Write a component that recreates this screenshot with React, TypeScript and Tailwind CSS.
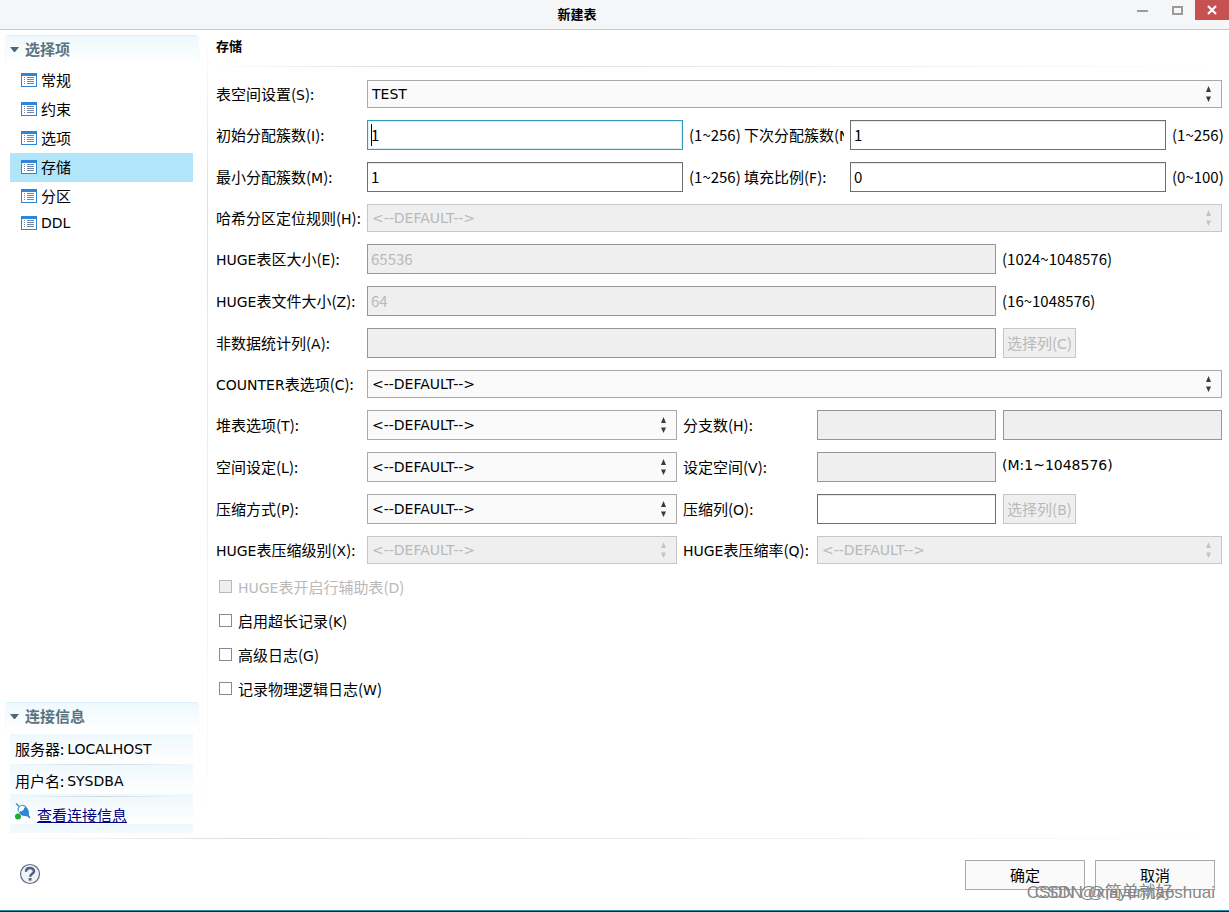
import type { ReactNode } from "react";

const NAV_ITEMS = ["常规", "约束", "选项", "存储", "分区", "DDL"];

const CHECKS = [
  { id: "huge-aux", label: "HUGE表开启行辅助表(D)", disabled: true },
  { id: "long-row", label: "启用超长记录(K)" },
  { id: "adv-log", label: "高级日志(G)" },
  { id: "phy-log", label: "记录物理逻辑日志(W)" },
];

// Letters are set in the wide UI face, everything else in the CJK one.
function Mixed({ text }: { text: string }) {
  return (
    <>
      {text.split(/([A-Za-z]+)/).map((part, i) =>
        i % 2 ? (
          <span key={i} className="font-['DejaVu_Sans',sans-serif] text-[14px]">
            {part}
          </span>
        ) : (
          part
        ),
      )}
    </>
  );
}

function Label({ htmlFor, text }: { htmlFor: string; text: string }) {
  return (
    <label htmlFor={htmlFor} className="overflow-hidden whitespace-nowrap leading-[24px]">
      <Mixed text={text} />
    </label>
  );
}

function Field({
  id,
  value = "",
  disabled,
  focused,
  className = "",
  label,
}: {
  id: string;
  value?: string;
  disabled?: boolean;
  focused?: boolean;
  className?: string;
  label?: string;
}) {
  const tone = disabled
    ? "border-[#969696] bg-[#efefef] text-[#b9b9b9]"
    : focused
      ? "border-[#3399bb] bg-white shadow-[inset_0_0_0_1px_#d8f0f8]"
      : "border-[#6e6e6e] bg-white shadow-[inset_0_1px_0_#e8e8e8]";
  return (
    <div className={`relative min-w-0 ${className}`}>
      <input
        id={id}
        aria-label={label}
        defaultValue={value}
        disabled={disabled}
        className={`block h-[30px] w-full border px-[3px] pb-[2px] outline-none ${tone}`}
      />
      {focused && <span className="absolute left-1 top-1 h-[22px] w-px bg-black" />}
    </div>
  );
}

function Combo({
  id,
  value = "<--DEFAULT-->",
  disabled,
  tall,
  className = "",
}: {
  id: string;
  value?: string;
  disabled?: boolean;
  tall?: boolean;
  className?: string;
}) {
  return (
    <div className={`relative min-w-0 ${className}`}>
      <select
        id={id}
        disabled={disabled}
        className={`block w-full appearance-none border pl-1 font-['DejaVu_Sans',sans-serif] text-[14px] opacity-100 outline-none ${
          tall ? "h-[30px]" : "h-[28px]"
        } ${disabled ? "border-[#c6c6c6] bg-[#efefef] text-[#b9b9b9]" : "border-[#a9a9a9] bg-[#fafafa] text-black"}`}
      >
        <option>{value}</option>
      </select>
      <svg
        viewBox="0 0 6 16"
        className={`pointer-events-none absolute right-[10px] top-1/2 h-4 w-[6px] -translate-y-1/2 ${
          disabled ? "fill-[#c4c4c4]" : "fill-[#3a3a3a]"
        }`}
      >
        <path d="M2.500 0 5 6H0zM0 10.500H5L2.500 16z" />
      </svg>
    </div>
  );
}

function PickButton({ text }: { text: string }) {
  return (
    <button
      type="button"
      disabled
      className="ml-px h-[30px] w-[73px] whitespace-nowrap border border-[#c6c6c6] bg-[#efefef] text-[#b9b9b9]"
    >
      <Mixed text={text} />
    </button>
  );
}

function SectionHeader({ children }: { children: ReactNode }) {
  return (
    <div className="flex h-[28px] items-center gap-[5px] rounded-t border-x border-t border-x-[#f1fafd] border-t-[#d8f2f8] bg-linear-to-b from-[#eef9fd] to-white pb-[2px] pl-1 font-bold text-[#5b7480]">
      <svg viewBox="0 0 9 5" className="mr-px mt-px h-[5px] w-[9px] fill-[#4d6874]">
        <path d="M0 0H9L5 5H4z" />
      </svg>
      {children}
    </div>
  );
}

function ListIcon() {
  return (
    <svg viewBox="0 0 16 14" className="h-[14px] w-4 shrink-0">
      <path d="M0 0H16V14H0z" fill="#2d86d8" />
      <path d="M1 3H15V13H1z" fill="#fff" />
      <path
        d="M3 4H4V5H3zM3 6H4V7H3zM3 8H4V9H3zM3 10H4V11H3zM6 4H13V5H6zM6 6H13V7H6zM6 8H13V9H6zM6 10H13V11H6z"
        fill="#7187a8"
      />
    </svg>
  );
}

function PlugIcon() {
  return (
    <svg viewBox="0 0 16 17" className="h-[17px] w-4 shrink-0">
      <path d="M1 0.500 4 3.500M12.500 12 15 15" stroke="#3e8fc8" strokeWidth="1.300" fill="none" />
      <path d="M3.500 8.500C2 5 4.500 1.800 8 2.300 9.500 2.600 10.800 3.400 11 4.500" fill="#fff" stroke="#4a9cc8" strokeWidth="1.200" />
      <path d="M4 9.500 5.500 8 6.500 8.500 9 6.500 9 5 10.800 3.800C13.500 6 14.500 9 13.800 12L15 15 12 13.300C9 13.500 5.500 12.500 4 9.500z" fill="#2d86d8" />
      <circle cx="3" cy="13.500" r="3" fill="#22aa33" />
    </svg>
  );
}

function Sidebar() {
  return (
    <aside className="flex w-[207px] shrink-0 flex-col pl-[5px] pr-2 pt-[5px]">
      <SectionHeader>选择项</SectionHeader>
      <nav className="ml-[5px] mr-[6px] mt-[3px] flex flex-col">
        {NAV_ITEMS.map((item) => (
          <button
            key={item}
            type="button"
            className={`flex items-center gap-1 pb-[2px] pl-[11px] text-left ${
              item === "DDL" ? "h-[25px]" : "h-[29px]"
            } ${item === "存储" ? "bg-[#b0e5fa]" : ""}`}
          >
            <ListIcon />
            <Mixed text={item} />
          </button>
        ))}
      </nav>
      <div className="mt-auto">
        <SectionHeader>连接信息</SectionHeader>
        <div className="mb-[5px] ml-[5px] mr-[6px] mt-1 h-[99px] bg-[repeating-linear-gradient(#eef8fd_0,#ffffff_30px)] px-[5px]">
          <div className="flex h-[30px] items-center gap-[3px]">
            服务器: <Mixed text="LOCALHOST" />
          </div>
          <div className="h-px bg-linear-to-r from-transparent via-[#d0d8dc] to-transparent" />
          <div className="flex h-[31px] items-center gap-[3px]">
            用户名: <Mixed text="SYSDBA" />
          </div>
          <div className="h-px bg-linear-to-r from-transparent via-[#d0d8dc] to-transparent" />
          <div className="flex h-[36px] gap-[6px] pt-[6px]">
            <PlugIcon />
            <a href="#connection" className="leading-[24px] text-[#000080] underline">
              查看连接信息
            </a>
          </div>
        </div>
      </div>
    </aside>
  );
}

function StorageForm() {
  return (
    <form className="grid grid-cols-[145px_310fr_128px_179fr_220fr] items-center gap-x-[6px] gap-y-3 pl-2 pr-[7px] pt-[13px]">
      <Label htmlFor="tablespace" text="表空间设置(S):" />
      <Combo id="tablespace" value="TEST" className="col-span-4" />

      <Label htmlFor="initial" text="初始分配簇数(I):" />
      <div className="col-span-4 flex items-center gap-[6px]">
        <Field id="initial" value="1" focused className="flex-1" />
        <span className="w-[49px] whitespace-nowrap">(1~256)</span>
        <div className="flex w-[100px]">
          <Label htmlFor="next" text="下次分配簇数(N):" />
        </div>
        <Field id="next" value="1" className="flex-1" />
        <span className="w-[50px] whitespace-nowrap">(1~256)</span>
      </div>

      <Label htmlFor="minimum" text="最小分配簇数(M):" />
      <div className="col-span-4 flex items-center gap-[6px]">
        <Field id="minimum" value="1" className="flex-1" />
        <span className="w-[49px] whitespace-nowrap">(1~256)</span>
        <div className="flex w-[100px]">
          <Label htmlFor="fill" text="填充比例(F):" />
        </div>
        <Field id="fill" value="0" className="flex-1" />
        <span className="w-[50px] whitespace-nowrap">(0~100)</span>
      </div>

      <Label htmlFor="hash" text="哈希分区定位规则(H):" />
      <Combo id="hash" disabled className="col-span-4" />

      <Label htmlFor="section" text="HUGE表区大小(E):" />
      <Field id="section" value="65536" disabled className="col-span-3" />
      <span>(1024~1048576)</span>

      <Label htmlFor="filesize" text="HUGE表文件大小(Z):" />
      <Field id="filesize" value="64" disabled className="col-span-3" />
      <span>(16~1048576)</span>

      <Label htmlFor="nostat" text="非数据统计列(A):" />
      <Field id="nostat" disabled className="col-span-3" />
      <PickButton text="选择列(C)" />

      <Label htmlFor="counter" text="COUNTER表选项(C):" />
      <Combo id="counter" className="col-span-4" />

      <Label htmlFor="heap" text="堆表选项(T):" />
      <Combo id="heap" tall />
      <Label htmlFor="branch" text="分支数(H):" />
      <Field id="branch" disabled />
      <Field id="nobranch" disabled label="分支数" className="ml-px" />

      <Label htmlFor="space" text="空间设定(L):" />
      <Combo id="space" tall />
      <Label htmlFor="spacesize" text="设定空间(V):" />
      <Field id="spacesize" disabled />
      <span className="pb-1 font-['DejaVu_Sans',sans-serif] text-[14px]">(M:1~1048576)</span>

      <Label htmlFor="compress" text="压缩方式(P):" />
      <Combo id="compress" tall />
      <Label htmlFor="columns" text="压缩列(O):" />
      <Field id="columns" />
      <PickButton text="选择列(B)" />

      <Label htmlFor="level" text="HUGE表压缩级别(X):" />
      <Combo id="level" disabled />
      <Label htmlFor="ratio" text="HUGE表压缩率(Q):" />
      <Combo id="ratio" disabled className="col-span-2" />

      {CHECKS.map((c) => (
        <div key={c.id} className="col-span-5 flex h-[22px] items-center gap-[6px] pl-[3px]">
          <input
            id={c.id}
            type="checkbox"
            disabled={c.disabled}
            className={`mb-[2px] size-[13px] appearance-none border ${
              c.disabled ? "border-[#b9b9b9] bg-[#efefef]" : "border-[#8a8a8a] bg-white"
            }`}
          />
          <label htmlFor={c.id} className={c.disabled ? "text-[#b9b9b9]" : ""}>
            <Mixed text={c.label} />
          </label>
        </div>
      ))}
    </form>
  );
}

function Divider() {
  return <div className="h-px bg-linear-to-r from-white via-[#dcdcdc] via-20% to-white" />;
}

export default function App() {
  return (
    <div className="relative flex min-h-screen flex-col bg-white font-['Noto_Sans_CJK_SC',sans-serif] text-[15px] leading-[22px] text-black">
      <header className="relative flex h-[30px] items-center justify-center border-b border-[#c8c8c8] bg-[#f5f6f8]">
        <h1 className="pb-px pr-[75px] text-[13px] font-bold">新建表</h1>
        <div className="absolute right-0 top-0 flex h-5">
          <button type="button" aria-label="最小化" className="flex w-[35px] items-center justify-center">
            <span className="mt-[2px] h-[2px] w-[11px] bg-[#9b9b9b]" />
          </button>
          <button type="button" aria-label="最大化" className="flex w-[35px] items-center justify-center">
            <span className="mt-px h-[9px] w-[11px] border-2 border-[#9b9b9b]" />
          </button>
          <button type="button" aria-label="关闭" className="flex w-[34px] items-center justify-center bg-[#c75050]">
            <svg viewBox="0 0 10 10" className="size-[10px]">
              <path d="M1 1 9 9M9 1 1 9" stroke="#fff" strokeWidth="2.200" />
            </svg>
          </button>
        </div>
      </header>

      <div className="flex flex-1">
        <Sidebar />
        <div className="w-px bg-linear-to-b from-white via-[#e0e0e0] via-20% to-white" />
        <main className="min-w-0 flex-1">
          <h2 className="flex h-[36px] items-center pb-1 pl-2 text-[13px] font-bold">存储</h2>
          <Divider />
          <StorageForm />
        </main>
      </div>

      <Divider />
      <footer className="flex h-[71px] items-center justify-between pl-[19px] pr-[14px]">
        <button type="button" aria-label="帮助" className="pb-[2px]">
          <svg viewBox="0 0 22 22" className="size-[22px]">
            <circle cx="11" cy="11" r="9.500" fill="#f2f2f2" stroke="#5a6b8c" strokeWidth="1.200" />
            <path
              d="M7 8.800C7 3.800 15 4 15 8.200 15 10.800 11.200 10.800 11.200 13.800"
              fill="none"
              stroke="#4f6184"
              strokeWidth="2.600"
            />
            <path d="M9.700 15H12.500V17.600H9.700z" fill="#4f6184" />
          </svg>
        </button>
        <div className="flex gap-[10px]">
          <button type="button" className="h-[30px] w-[120px] border border-[#a9a9a9] bg-[#fafafa]">
            确定
          </button>
          <button type="button" className="h-[30px] w-[120px] border border-[#a9a9a9] bg-[#fafafa]">
            取消
          </button>
        </div>
      </footer>
      <div className="h-[2px] border-t border-[#2a8aa5] bg-[#0c2a3c]" />

      <div className="pointer-events-none absolute bottom-2 right-[14px] grid whitespace-nowrap font-['Liberation_Sans','Noto_Sans_CJK_SC',sans-serif] text-[17px] text-[#888888]">
        <span className="col-start-1 row-start-1">CSDN @xiayunhaoshuai</span>
        <span className="col-start-1 row-start-1 pl-2">CSDN @简单就好</span>
      </div>
    </div>
  );
}
